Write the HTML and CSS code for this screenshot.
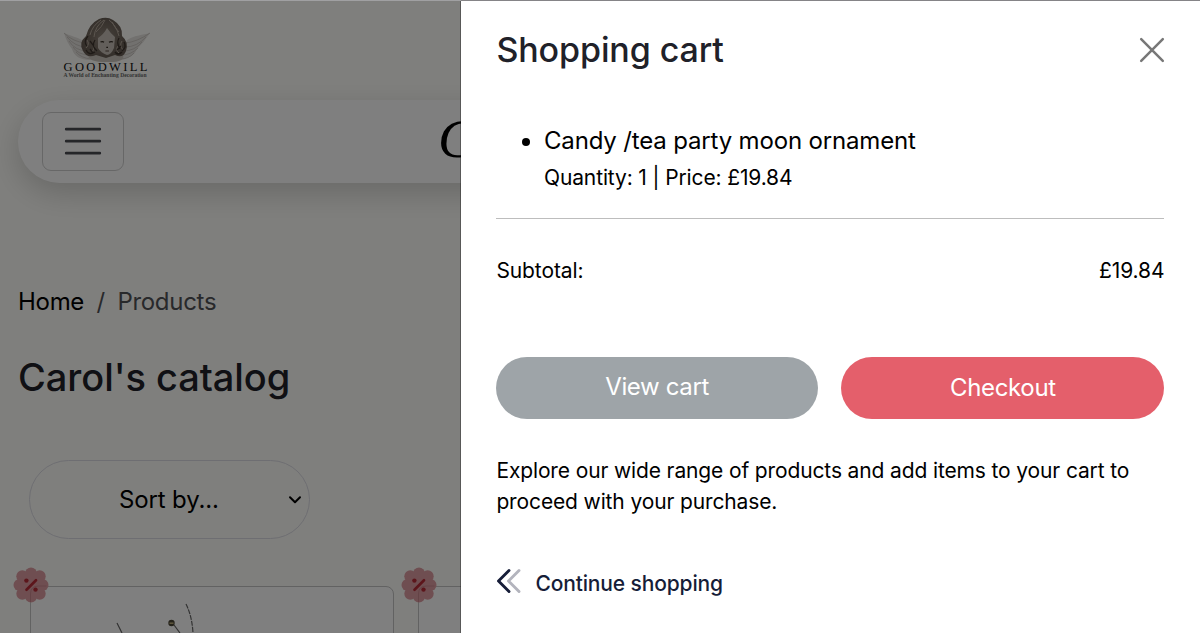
FILE: index.html
```html
<!DOCTYPE html>
<html lang="en">
<head>
<meta charset="utf-8">
<title>Carol's catalog</title>
<link rel="stylesheet" href="styles.css">
</head>
<body>
<div class="app">
  <main class="page">
    <svg class="logo" width="100" height="68" viewBox="0 0 100 68">
      <defs>
        <filter id="soft"><feGaussianBlur stdDeviation=".7"/></filter>
        <radialGradient id="curl"><stop offset="0" stop-color="#91867b"/><stop offset=".55" stop-color="#786d63"/><stop offset="1" stop-color="#675d54"/></radialGradient>
      </defs>
      <g filter="url(#soft)">
        <path d="M9 18C16 21 22 22 29 26L35 45C25 45 19 41 17 34Q12 28 9 18Z" fill="#e5e2de"/>
        <path d="M95 18C87 20 81 20 72 25L64 45Q79 43 82 34Q89 27 95 18Z" fill="#e5e2de"/>
        <g fill="none" stroke="#bfbab4" stroke-width=".7">
          <path d="M9 18Q18 27 31 28M12 22Q20 32 32 32M14 26Q20 36 33 36M18 32Q23 40 35 40M21 37Q26 43 36 44"/>
          <path d="M95 18Q82 27 70 28M91 22Q82 32 70 32M87 27Q80 36 68 36M83 33Q76 40 66 40M79 38Q74 44 65 44"/>
        </g>
        <path d="M34 38Q30 46 47 47H58Q72 46 67 38Z" fill="#cbc5bd"/>
        <path d="M44 4Q52 1 58 5Q68 11 67 21Q74 27 71 36Q68 44 60 40L51 43L41 40Q32 44 28 36Q23 28 31 21Q34 9 44 4Z" fill="url(#curl)"/>
        <path d="M43 23Q49 19 52 13Q56 19 60 22L59 33Q56 40 52 40Q46 38 43 33Z" fill="#c6bfb6"/>
        <g fill="none" stroke="#b5a99c" stroke-width="1">
          <path d="M49 5Q40 11 39 22M46 5Q37 11 35 20M54 5Q61 10 64 21M50 5Q47 12 41 17M57 7Q60 13 64 17"/>
          <path d="M32 25Q35 29 31 33M37 28Q41 32 37 37M67 26Q64 30 68 35M63 31Q60 35 64 38"/>
        </g>
        <g fill="none" stroke="#3e352d" stroke-width="1.3">
          <path d="M33 21Q28 27 32 31M40 25Q36 31 42 36M64 23Q61 28 65 34M69 27Q72 32 67 36M31 35Q34 41 40 37M60 37Q63 41 67 37M35 26L38 30M35 34L38 38M66 31L62 35"/>
        </g>
        <path d="M45.5 27Q47.5 26 49 27.2M54 27.2Q56 26 58 27M51.3 32.4H53" fill="none" stroke="#342b24" stroke-width="1.3"/>
        <path d="M50.4 36H54" stroke="#66554b" stroke-width="1.1"/>
      </g>
      <text class="logo-name" x="8.5" y="55.5" textLength="84">GOODWILL</text>
      <text class="logo-tag" x="8.5" y="62" textLength="83" lengthAdjust="spacingAndGlyphs">A World of Enchanting Decoration</text>
    </svg>
    <header class="navbar">
      <button class="toggler" aria-label="Menu">
        <svg width="44" height="44" viewBox="0 0 44 44"><path d="M5.2 9.2H38.8M5.2 21.2H38.8M5.2 33.2H38.8" stroke="#4b4c52" stroke-width="2.7" stroke-linecap="round"/></svg>
      </button>
      <span class="brand">C</span>
    </header>
    <nav class="crumbs"><a class="home">Home</a><span>/</span><span>Products</span></nav>
    <h1 class="title">Carol's catalog</h1>
    <div class="sort">
      <span>Sort by...</span>
      <svg width="14" height="10" viewBox="0 0 14 10"><path d="M2 2.2L7 7.2L12 2.2" fill="none" stroke="#000" stroke-width="2" stroke-linecap="round" stroke-linejoin="round"/></svg>
    </div>
    <div class="cards">
      <article class="card">
        <svg class="badge" width="36" height="36" viewBox="-18 -18 36 36"><g fill="#df9da3"><circle r="14"/><circle cx="0" cy="-11.5" r="6"/><circle cx="8.7" cy="-8.7" r="6"/><circle cx="11.5" cy="0" r="6"/><circle cx="8.7" cy="8.7" r="6"/><circle cx="0" cy="11.5" r="6"/><circle cx="-8.7" cy="8.7" r="6"/><circle cx="-11.5" cy="0" r="6"/><circle cx="-8.7" cy="-8.7" r="6"/></g><path d="M0 16V8Q0 0 8 0H16" transform="translate(-.5 1)" fill="none" stroke="#c9868d"/><path d="M-4.5 4.7L5 -4.7" stroke="#b82b37" stroke-width="2.7" stroke-linecap="round"/><circle cx="-4.6" cy="-4.4" r="2.2" fill="#b82b37"/><circle cx="4.5" cy="4.6" r="2.2" fill="#b82b37"/></svg>
        <svg class="ornament" width="120" height="46" viewBox="0 0 120 46"><g fill="none" stroke="#666" stroke-width="1.2"><path d="M37 36L42 46M94 38L100 46"/><path d="M106 17Q112 29 113 46" stroke-dasharray="5 1"/></g><circle cx="91.5" cy="36" r="3.2" fill="#4b4637"/><path d="M89.5 36.2H93.5" stroke="#b9aa79" stroke-width="1.6"/></svg>
      </article>
      <article class="card">
        <svg class="badge" width="36" height="36" viewBox="-18 -18 36 36"><g fill="#df9da3"><circle r="14"/><circle cx="0" cy="-11.5" r="6"/><circle cx="8.7" cy="-8.7" r="6"/><circle cx="11.5" cy="0" r="6"/><circle cx="8.7" cy="8.7" r="6"/><circle cx="0" cy="11.5" r="6"/><circle cx="-8.7" cy="8.7" r="6"/><circle cx="-11.5" cy="0" r="6"/><circle cx="-8.7" cy="-8.7" r="6"/></g><path d="M0 16V8Q0 0 8 0H16" transform="translate(-.5 1)" fill="none" stroke="#c9868d"/><path d="M-4.5 4.7L5 -4.7" stroke="#b82b37" stroke-width="2.7" stroke-linecap="round"/><circle cx="-4.6" cy="-4.4" r="2.2" fill="#b82b37"/><circle cx="4.5" cy="4.6" r="2.2" fill="#b82b37"/></svg>
      </article>
    </div>
    <div class="backdrop"></div>
  </main>
  <aside class="cart">
    <div class="cart-head">
      <h2>Shopping cart</h2>
      <svg width="26" height="26" viewBox="0 0 26 26"><path d="M2.2 2.2L23.8 23.8M23.8 2.2L2.2 23.8" stroke="#777" stroke-width="2.5" stroke-linecap="round"/></svg>
    </div>
    <ul class="items"><li><div class="item-name">Candy /tea party moon ornament</div><div class="item-info">Quantity: 1 | Price: £19.84</div></li></ul>
    <div class="subtotal"><span>Subtotal:</span><span>£19.84</span></div>
    <div class="actions"><button class="btn view">View cart</button><button class="btn checkout">Checkout</button></div>
    <p class="note">Explore our wide range of products and add items to your cart to proceed with your purchase.</p>
    <a class="continue"><svg width="26" height="26" viewBox="0 0 26 26" fill="none" stroke-width="2.9" stroke-linecap="round" stroke-linejoin="round"><path d="M23 2.5L12.5 13L23 23.5" stroke="#b3b4bd"/><path d="M13 2.5L2.5 13L13 23.5" stroke="#161d38"/></svg><span>Continue shopping</span></a>
  </aside>
</div>
</body>
</html>
```
FILE: styles.css
```css
* { box-sizing: border-box; }
body { margin: 0; font-family: Inter, "Liberation Sans", sans-serif; color: #000; }
.app { display: flex; width: 1200px; height: 633px; overflow: hidden; }
.page { position: relative; width: 461px; height: 633px; overflow: hidden; background: #fffffb; border-top: 1px solid #a0a0a2; }
.backdrop { position: absolute; inset: -1px 0 0 0; background: rgba(0, 0, 0, .5); border-right: 1px solid rgba(0, 0, 0, .3); }
.logo { display: block; margin: 14px 0 0 55px; }
.logo-name { font: 12.5px "Liberation Serif", serif; fill: #111; }
.logo-tag { font: bold 5.5px "Liberation Serif", serif; fill: #666; }
.navbar { display: flex; justify-content: space-between; width: 600px; height: 83px; margin: 17px 0 0 18px; padding: 12px 24px; border-radius: 42px; background: #fff; box-shadow: 0 10px 30px rgba(0, 0, 0, .18); }
.toggler { display: flex; align-items: center; justify-content: center; width: 82px; height: 59px; padding: 0; border: 1px solid #cfcfcf; border-radius: 9px; background: none; }
.brand { width: 156px; font: italic 55px/54px "Liberation Serif", serif; }
.crumbs { display: flex; gap: 12.5px; margin: 104px 0 0 18px; font-size: 24px; line-height: 30px; letter-spacing: -.3px; color: #515257; }
.home { color: #000; }
.title { margin: 37px 0 0 18px; font-size: 38px; line-height: 46px; font-weight: 500; letter-spacing: -.05px; color: #202129; }
.sort { display: flex; align-items: center; justify-content: space-between; width: 281px; height: 79px; margin: 60px 0 0 29px; padding: 0 7px 0 89px; border: 1px solid #dcdce4; border-radius: 40px; font-size: 24px; letter-spacing: -.15px; }
.cards { display: flex; gap: 24px; width: 900px; margin: 47px 0 0 30px; }
.card { position: relative; width: 364px; height: 120px; border: 1px solid #c4c4c4; border-radius: 8px; background: #fff; }
.badge { position: absolute; left: -18px; top: -20px; }
.ornament { position: absolute; left: 49px; top: 0; }
.cart { width: 739px; padding: 27px 35.6px 0 35.4px; background: #fff; border-top: 1px solid #858487; }
.cart-head { display: flex; align-items: center; justify-content: space-between; height: 44px; }
.cart-head h2 { margin: 0; font-size: 34px; line-height: 44px; font-weight: 500; letter-spacing: -.1px; color: #202129; }
.cart-head svg { margin-right: -1px; }
.items { margin: 51px 0 0; padding: 0 0 24px 47.6px; border-bottom: 1px solid #bdbdbd; font-size: 24px; }
.item-name { line-height: 36px; letter-spacing: -.16px; }
.item-info { font-size: 21px; line-height: 32px; padding-top: 3px; letter-spacing: -.13px; }
.subtotal { display: flex; justify-content: space-between; margin-top: 36px; font-size: 21px; line-height: 32px; letter-spacing: -.1px; }
.actions { display: grid; grid-template-columns: 321.5px 323px; justify-content: space-between; margin-top: 70px; }
.btn { height: 62px; padding: 0 0 1px; border: 0; border-radius: 31px; font: 24px Inter, sans-serif; letter-spacing: -.35px; color: #fff; }
.view { background: #9ea4a8; padding-bottom: 3px; }
.checkout { background: #e45f6b; }
.note { margin: 36px 0 0; font-size: 21px; line-height: 31.4px; letter-spacing: -.13px; }
.continue { display: flex; align-items: center; gap: 13px; margin-top: 50.2px; font-size: 21px; line-height: 32px; font-weight: 500; letter-spacing: -.14px; color: #161d38; }
.continue svg { margin-top: -6px; }
```
